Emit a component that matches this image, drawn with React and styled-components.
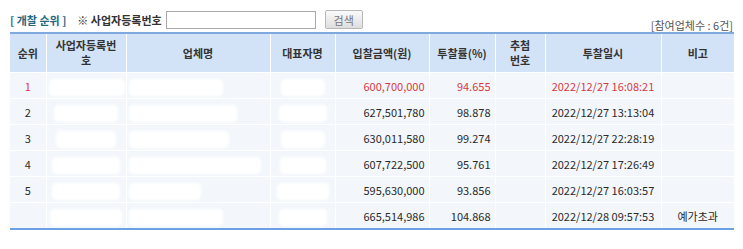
import React from 'react'
import styled, { createGlobalStyle } from 'styled-components'

const GlobalStyle = createGlobalStyle`
    body {
        margin: 0;
        background: #fff;
        font-family: "Noto Sans CJK KR", "Noto Sans", sans-serif;
    }
`

const rows = [
    { rank: '1', amount: '600,700,000', rate: '94.655', date: '2022/12/27 16:08:21', note: '', win: true, blobs: [72, 90, 40] },
    { rank: '2', amount: '627,501,780', rate: '98.878', date: '2022/12/27 13:13:04', note: '', blobs: [60, 104, 44] },
    { rank: '3', amount: '630,011,580', rate: '99.274', date: '2022/12/27 22:28:19', note: '', blobs: [56, 96, 40] },
    { rank: '4', amount: '607,722,500', rate: '95.761', date: '2022/12/27 17:26:49', note: '', blobs: [64, 128, 42] },
    { rank: '5', amount: '595,630,000', rate: '93.856', date: '2022/12/27 16:03:57', note: '', blobs: [64, 68, 48] },
    { rank: '', amount: '665,514,986', rate: '104.868', date: '2022/12/28 09:57:53', note: '예가초과', blobs: [68, 90, 44] },
]

export default function App() {
    return (
        <Page>
            <GlobalStyle />
            <Toolbar>
                <Title>[ 개찰 순위 ]</Title>
                <Label>※ 사업자등록번호</Label>
                <SearchInput />
                <SearchButton>검색</SearchButton>
                <Count>[참여업체수 : 6건]</Count>
            </Toolbar>
            <Table>
                <colgroup>
                    <col style={{ width: 36 }} />
                    <col style={{ width: 80 }} />
                    <col style={{ width: 144 }} />
                    <col style={{ width: 65 }} />
                    <col style={{ width: 94 }} />
                    <col style={{ width: 66 }} />
                    <col style={{ width: 50 }} />
                    <col style={{ width: 116 }} />
                    <col style={{ width: 73 }} />
                </colgroup>
                <thead>
                    <tr>
                        <Th>순위</Th>
                        <Th>사업자등록번<br />호</Th>
                        <Th>업체명</Th>
                        <Th>대표자명</Th>
                        <Th>입찰금액(원)</Th>
                        <Th>투찰률(%)</Th>
                        <Th>추첨<br />번호</Th>
                        <Th>투찰일시</Th>
                        <Th>비고</Th>
                    </tr>
                </thead>
                <tbody>
                    {rows.map((r, i) => (
                        <tr key={i}>
                            <Td $red={r.win}>{r.rank}</Td>
                            <Td><Blob style={{ width: r.blobs[0] }} /></Td>
                            <Td $align="left"><Blob style={{ width: r.blobs[1] }} /></Td>
                            <Td><Blob style={{ width: r.blobs[2] }} /></Td>
                            <Td $align="right" $red={r.win}>{r.amount}</Td>
                            <Td $align="right" $red={r.win}>{r.rate}</Td>
                            <Td />
                            <Td $red={r.win}>{r.date}</Td>
                            <Td>{r.note}</Td>
                        </tr>
                    ))}
                </tbody>
            </Table>
        </Page>
    )
}

const Page = styled.div`
    padding: 10px 9px 0 10px;
    width: 724px;
`
const Toolbar = styled.div`
    display: flex;
    align-items: center;
    height: 19px;
    margin-bottom: 3px;
    font-size: 11px;
`
const Title = styled.span`
    color: #24677f;
    font-weight: bold;
    margin-right: 11px;
`
const Label = styled.span`
    color: #333;
    font-weight: bold;
    margin-right: 4px;
`
const SearchInput = styled.input`
    box-sizing: border-box;
    width: 150px;
    height: 18px;
    border: 1px solid #a9a9a9;
    padding: 0 3px;
`
const SearchButton = styled.button`
    box-sizing: border-box;
    margin-left: 9px;
    width: 38px;
    height: 19px;
    padding: 0;
    font-family: inherit;
    font-size: 11px;
    color: #777;
    border: 1px solid #b8b8b8;
    border-radius: 2px;
    background: linear-gradient(#fafafa, #dedede);
`
const Count = styled.span`
    margin-left: auto;
    align-self: flex-end;
    margin-bottom: -4px;
    margin-right: 1px;
    font-size: 11px;
    color: #555;
`
const Table = styled.table`
    width: 724px;
    table-layout: fixed;
    border-collapse: collapse;
    border-top: 2px solid #7eaadf;
    border-bottom: 2px solid #6ba1e2;
    font-size: 11px;
    color: #333;
`
const Th = styled.th`
    height: 38px;
    padding: 0 4px;
    background: #d3e3f7;
    border-left: 1px solid #fff;
    border-right: 1px solid #fff;
    font-weight: bold;
    line-height: 15px;
    color: #333;
    &:first-child { border-left: none; }
    &:last-child { border-right: none; }
`
const Td = styled.td`
    height: 25px;
    padding: 0 4px;
    background: #f3f7fc;
    border: 1px solid #fff;
    text-align: ${p => p.$align || 'center'};
    color: ${p => (p.$red ? '#d43b3f' : '#2a2a2a')};
    white-space: nowrap;
    &:first-child { border-left: none; }
    &:last-child { border-right: none; }
    tr:last-child > & { border-bottom: none; }
`
const Blob = styled.span`
    display: inline-block;
    vertical-align: middle;
    height: 13px;
    background: #fff;
    border-radius: 3px;
    box-shadow: 0 0 3px 2px #fff;
`
